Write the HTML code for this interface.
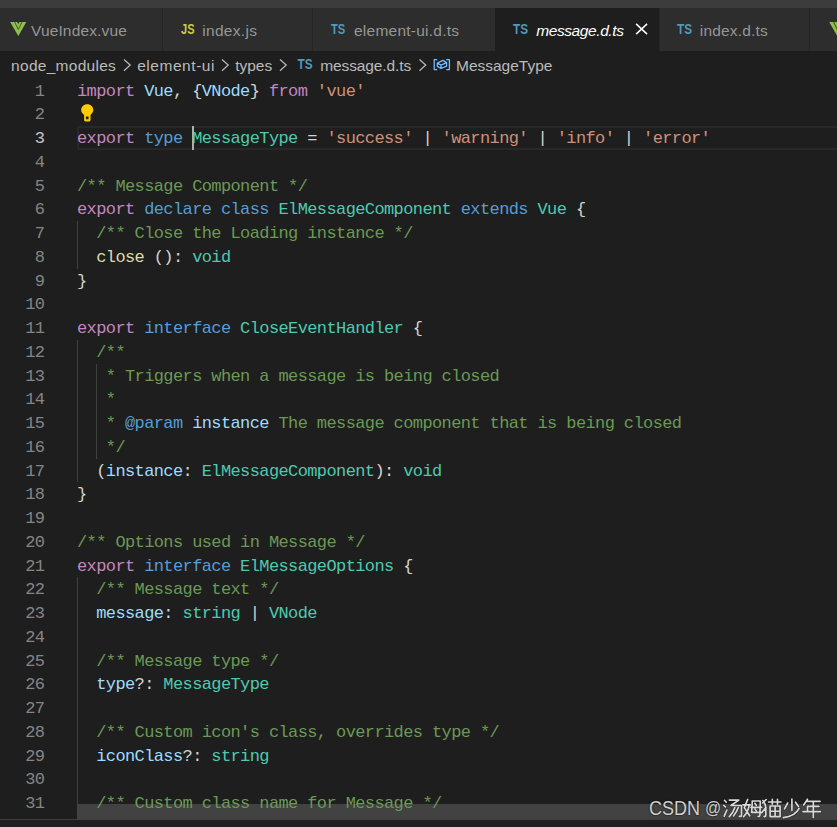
<!DOCTYPE html>
<html><head><meta charset="utf-8">
<style>
*{margin:0;padding:0;box-sizing:border-box}
html,body{width:837px;height:827px;overflow:hidden;background:#1e1e1e}
body{position:relative;font-family:"Liberation Sans",sans-serif}
.abs{position:absolute}
#title{left:0;top:0;width:837px;height:8px;background:#3c3c3c}
#tabs{left:0;top:8px;width:837px;height:43px;background:#252526}
.tab{position:absolute;top:0;height:43px;background:#2d2d2d}
.tab.active{background:#1e1e1e}
.lbl{position:absolute;top:1px;line-height:43px;font-size:15.5px;color:#969696;white-space:nowrap}
.active .lbl{color:#fff;font-style:italic}
.ico{position:absolute}
.lbl i,.cr i{display:inline-block;font-style:inherit}
#crumbs{left:0;top:51px;width:837px;height:27.5px;background:#1e1e1e}
.cr{position:absolute;top:1px;line-height:27.5px;font-size:15.5px;color:#bbbbbb;white-space:nowrap}
.chev{position:absolute}
#editor{left:0;top:78.5px;width:837px;height:748.5px}
.ln{position:absolute;left:0;width:44.4px;text-align:right;font-family:"Liberation Mono",monospace;font-size:17px;letter-spacing:-0.6px;color:#858585;line-height:23.75px;height:23.75px;white-space:pre;padding-top:1px}
.cl{position:absolute;left:77px;font-family:"Liberation Mono",monospace;font-size:17px;color:#d4d4d4;line-height:23.75px;height:23.75px;white-space:pre;padding-top:1px}
.cl i{display:inline-block;width:9.6px;font-style:normal}
.k{color:#c586c0}.b{color:#569cd6}.v{color:#9cdcfe}.t{color:#4ec9b0}.s{color:#ce9178}.c{color:#6a9955}.f{color:#dcdcaa}
.curline{position:absolute;left:77px;top:47.5px;width:760px;height:24px;border:2px solid #282828;border-right:none}
.act{color:#c6c6c6}
.cursor{position:absolute;left:192px;top:47.5px;width:2px;height:24px;background:#aeafad;z-index:2}
.hscroll{position:absolute;left:77px;top:725.5px;width:760px;height:15px;background:#424242}
.wm{font-size:20px;line-height:24px;color:#cfcfcf;white-space:nowrap;text-shadow:0 0 2px #000}
.guide{position:absolute;width:1px;background:#404040}
</style></head><body>
<div id="title" class="abs"></div>
<div id="tabs" class="abs">
  <div class="tab" style="left:0;width:162px">
    <svg class="ico" style="left:0;top:0" width="40" height="43" viewBox="0 8 40 43">
      <polygon points="10.2,21.9 26.3,21.9 18.3,36" fill="#8dc149"/>
      <polyline points="14.4,21.6 18.3,29.4 22.2,21.6" fill="none" stroke="#2d2d2d" stroke-width="0.75"/>
      <polygon points="17,21.6 19.7,21.6 18.35,24.3" fill="#2d2d2d"/>
    </svg>
    <div class="lbl" style="left:31px;"><i style="width:9.906px">V</i><i style="width:8.766px">u</i><i style="width:8.766px">e</i><i style="width:4.438px">I</i><i style="width:8.766px">n</i><i style="width:8.766px">d</i><i style="width:8.766px">e</i><i style="width:7.906px">x</i><i style="width:4.453px">.</i><i style="width:7.891px">v</i><i style="width:8.766px">u</i><i style="width:8.781px">e</i></div>
  </div>
  <div class="tab" style="left:163px;width:149px">
    <svg class="ico" style="left:0;top:0" width="40" height="43"><text x="18" y="25.9" font-family="Liberation Sans" font-weight="bold" font-size="14" fill="#cbcb41" textLength="13.5" lengthAdjust="spacingAndGlyphs">JS</text></svg>
    <div class="lbl" style="left:39.3px;"><i style="width:3.734px">i</i><i style="width:8.922px">n</i><i style="width:8.922px">d</i><i style="width:8.922px">e</i><i style="width:8.047px">x</i><i style="width:4.609px">.</i><i style="width:3.734px">j</i><i style="width:8.078px">s</i></div>
  </div>
  <div class="tab" style="left:313px;width:182px">
    <svg class="ico" style="left:0;top:0" width="40" height="43"><text x="18" y="25.9" font-family="Liberation Sans" font-weight="bold" font-size="14" fill="#519aba" textLength="14.3" lengthAdjust="spacingAndGlyphs">TS</text></svg>
    <div class="lbl" style="left:41px;"><i style="width:8.859px">e</i><i style="width:3.703px">l</i><i style="width:8.859px">e</i><i style="width:13.172px">m</i><i style="width:8.859px">e</i><i style="width:8.875px">n</i><i style="width:4.562px">t</i><i style="width:5.406px">-</i><i style="width:8.875px">u</i><i style="width:3.688px">i</i><i style="width:4.562px">.</i><i style="width:8.859px">d</i><i style="width:4.562px">.</i><i style="width:4.562px">t</i><i style="width:8.016px">s</i></div>
  </div>
  <div class="tab active" style="left:495px;width:164px">
    <svg class="ico" style="left:0;top:0" width="40" height="43"><text x="18" y="25.9" font-family="Liberation Sans" font-weight="bold" font-size="14" fill="#519aba" textLength="15" lengthAdjust="spacingAndGlyphs">TS</text></svg>
    <div class="lbl" style="left:41.2px;"><i style="width:12.500px">m</i><i style="width:8.219px">e</i><i style="width:7.359px">s</i><i style="width:7.344px">s</i><i style="width:8.219px">a</i><i style="width:8.219px">g</i><i style="width:8.219px">e</i><i style="width:3.906px">.</i><i style="width:8.234px">d</i><i style="width:3.906px">.</i><i style="width:3.906px">t</i><i style="width:7.359px">s</i></div>
    <svg class="ico" style="left:135px;top:10px" width="20" height="20" viewBox="0 0 20 20"><path d="M6.1,5.9 L17.1,16.1 M17.1,5.9 L6.1,16.1" stroke="#fff" stroke-width="1.5"/></svg>
  </div>
  <div class="tab" style="left:660px;width:149px">
    <svg class="ico" style="left:0;top:0" width="40" height="43"><text x="17" y="25.9" font-family="Liberation Sans" font-weight="bold" font-size="14" fill="#519aba" textLength="15" lengthAdjust="spacingAndGlyphs">TS</text></svg>
    <div class="lbl" style="left:39.75px;"><i style="width:3.625px">i</i><i style="width:8.797px">n</i><i style="width:8.797px">d</i><i style="width:8.812px">e</i><i style="width:7.938px">x</i><i style="width:4.484px">.</i><i style="width:8.797px">d</i><i style="width:4.500px">.</i><i style="width:4.484px">t</i><i style="width:7.953px">s</i></div>
  </div>
  <div class="tab" style="left:810px;width:27px">
    <svg class="ico" style="left:0;top:0" width="40" height="43" viewBox="0 8 40 43">
      <polygon points="19.2,21.9 35.3,21.9 27.3,36" fill="#8dc149"/>
      <polyline points="23.4,21.6 27.3,29.6 31.2,21.6" fill="none" stroke="#2d2d2d" stroke-width="0.9"/>
    </svg>
  </div>
</div>
<div id="crumbs" class="abs">
  <div class="cr" style="left:11.1px;"><i style="width:8.891px">n</i><i style="width:8.906px">o</i><i style="width:8.891px">d</i><i style="width:8.906px">e</i><i style="width:8.906px">_</i><i style="width:13.188px">m</i><i style="width:8.906px">o</i><i style="width:8.891px">d</i><i style="width:8.906px">u</i><i style="width:3.719px">l</i><i style="width:8.906px">e</i><i style="width:8.047px">s</i></div>
  <svg class="abs" style="left:0;top:0" width="837" height="27.5" viewBox="0 51 837 27.5">
    <g fill="none" stroke="#b4b4b4" stroke-width="1.3">
      <path d="M124,59.5 L130.2,65.1 L124,70.7"/>
      <path d="M222,59.5 L228.2,65.1 L222,70.7"/>
      <path d="M280,59.5 L286.2,65.1 L280,70.7"/>
      <path d="M419.5,59.5 L425.7,65.1 L419.5,70.7"/>
    </g>
    <text x="297.5" y="68.9" font-family="Liberation Sans" font-weight="bold" font-size="14" fill="#519aba" textLength="15" lengthAdjust="spacingAndGlyphs">TS</text>
    <g fill="none" stroke="#75beff" stroke-width="1.25" stroke-linejoin="round">
      <path d="M437.2,59.5 H434.2 V69.5 H437.2 M446.2,59.5 H449.4 V69.5 H446.2"/>
      <path d="M437.3,63.1 L442.9,60.4 L446.6,62.6 L441,65.1 Z M437.3,63.1 V66.4 L441,68.5 L446.6,66.2 V62.6 M441,65.1 V68.5"/>
    </g>
  </svg>
  <div class="cr" style="left:137.2px;"><i style="width:9.156px">e</i><i style="width:4.000px">l</i><i style="width:9.172px">e</i><i style="width:13.453px">m</i><i style="width:9.172px">e</i><i style="width:9.172px">n</i><i style="width:4.859px">t</i><i style="width:5.719px">-</i><i style="width:9.156px">u</i><i style="width:4.016px">i</i></div>
  <div class="cr" style="left:235.2px"><i style="width:4.297px">t</i><i style="width:7.750px">y</i><i style="width:8.625px">p</i><i style="width:8.625px">e</i><i style="width:7.766px">s</i></div>
  <div class="cr" style="left:320.3px;"><i style="width:12.781px">m</i><i style="width:8.500px">e</i><i style="width:7.641px">s</i><i style="width:7.625px">s</i><i style="width:8.500px">a</i><i style="width:8.500px">g</i><i style="width:8.500px">e</i><i style="width:4.188px">.</i><i style="width:8.500px">d</i><i style="width:4.188px">.</i><i style="width:4.188px">t</i><i style="width:7.641px">s</i></div>
  <div class="cr" style="left:456px"><i style="width:12.906px">M</i><i style="width:8.625px">e</i><i style="width:7.750px">s</i><i style="width:7.750px">s</i><i style="width:8.609px">a</i><i style="width:8.625px">g</i><i style="width:8.625px">e</i><i style="width:8.609px">T</i><i style="width:7.750px">y</i><i style="width:8.625px">p</i><i style="width:8.625px">e</i></div>
</div>
<div id="editor" class="abs">
<div class="curline"></div>
<div class="guide" style="left:77px;top:142.5px;height:47.5px"></div>
<div class="guide" style="left:77px;top:261.25px;height:142.5px"></div>
<div class="guide" style="left:96px;top:285px;height:95px"></div>
<div class="guide" style="left:77px;top:498.75px;height:250px"></div>
<svg class="abs" style="left:0;top:0" width="120" height="60" viewBox="0 78.5 120 60">
<path fill="#ffcc00" fill-rule="evenodd" d="M87.25,103.8 C90.8,103.8 93.3,106.3 93.3,109.4 C93.3,111.4 92.2,112.7 90.5,114.4 L90.5,119.6 Q90.5,120.9 89.2,120.9 L85.4,120.9 Q84.1,120.9 84.1,119.6 L84.1,114.4 C82.3,112.7 81.2,111.4 81.2,109.4 C81.2,106.3 83.7,103.8 87.25,103.8 Z M85.9,115.9 H88.6 V118.8 H85.9 Z"/>
</svg>
<div class="cursor"></div>
<div class="hscroll"></div>
<div class="ln" style="top:0.00px">1</div>
<div class="cl" style="top:0.00px"><span class="k"><i>i</i><i>m</i><i>p</i><i>o</i><i>r</i><i>t</i></span><i> </i><span class="v"><i>V</i><i>u</i><i>e</i></span><i>,</i><i> </i><i>{</i><span class="v"><i>V</i><i>N</i><i>o</i><i>d</i><i>e</i></span><i>}</i><i> </i><span class="k"><i>f</i><i>r</i><i>o</i><i>m</i></span><i> </i><span class="s"><i>'</i><i>v</i><i>u</i><i>e</i><i>'</i></span></div>
<div class="ln" style="top:23.75px">2</div>
<div class="ln act" style="top:47.50px">3</div>
<div class="cl" style="top:47.50px"><span class="k"><i>e</i><i>x</i><i>p</i><i>o</i><i>r</i><i>t</i></span><i> </i><span class="b"><i>t</i><i>y</i><i>p</i><i>e</i></span><i> </i><span class="t"><i>M</i><i>e</i><i>s</i><i>s</i><i>a</i><i>g</i><i>e</i><i>T</i><i>y</i><i>p</i><i>e</i></span><i> </i><i>=</i><i> </i><span class="s"><i>'</i><i>s</i><i>u</i><i>c</i><i>c</i><i>e</i><i>s</i><i>s</i><i>'</i></span><i> </i><i>|</i><i> </i><span class="s"><i>'</i><i>w</i><i>a</i><i>r</i><i>n</i><i>i</i><i>n</i><i>g</i><i>'</i></span><i> </i><i>|</i><i> </i><span class="s"><i>'</i><i>i</i><i>n</i><i>f</i><i>o</i><i>'</i></span><i> </i><i>|</i><i> </i><span class="s"><i>'</i><i>e</i><i>r</i><i>r</i><i>o</i><i>r</i><i>'</i></span></div>
<div class="ln" style="top:71.25px">4</div>
<div class="ln" style="top:95.00px">5</div>
<div class="cl" style="top:95.00px"><span class="c"><i>/</i><i>*</i><i>*</i><i> </i><i>M</i><i>e</i><i>s</i><i>s</i><i>a</i><i>g</i><i>e</i><i> </i><i>C</i><i>o</i><i>m</i><i>p</i><i>o</i><i>n</i><i>e</i><i>n</i><i>t</i><i> </i><i>*</i><i>/</i></span></div>
<div class="ln" style="top:118.75px">6</div>
<div class="cl" style="top:118.75px"><span class="k"><i>e</i><i>x</i><i>p</i><i>o</i><i>r</i><i>t</i></span><i> </i><span class="b"><i>d</i><i>e</i><i>c</i><i>l</i><i>a</i><i>r</i><i>e</i></span><i> </i><span class="b"><i>c</i><i>l</i><i>a</i><i>s</i><i>s</i></span><i> </i><span class="t"><i>E</i><i>l</i><i>M</i><i>e</i><i>s</i><i>s</i><i>a</i><i>g</i><i>e</i><i>C</i><i>o</i><i>m</i><i>p</i><i>o</i><i>n</i><i>e</i><i>n</i><i>t</i></span><i> </i><span class="b"><i>e</i><i>x</i><i>t</i><i>e</i><i>n</i><i>d</i><i>s</i></span><i> </i><span class="t"><i>V</i><i>u</i><i>e</i></span><i> </i><i>{</i></div>
<div class="ln" style="top:142.50px">7</div>
<div class="cl" style="top:142.50px"><i> </i><i> </i><span class="c"><i>/</i><i>*</i><i>*</i><i> </i><i>C</i><i>l</i><i>o</i><i>s</i><i>e</i><i> </i><i>t</i><i>h</i><i>e</i><i> </i><i>L</i><i>o</i><i>a</i><i>d</i><i>i</i><i>n</i><i>g</i><i> </i><i>i</i><i>n</i><i>s</i><i>t</i><i>a</i><i>n</i><i>c</i><i>e</i><i> </i><i>*</i><i>/</i></span></div>
<div class="ln" style="top:166.25px">8</div>
<div class="cl" style="top:166.25px"><i> </i><i> </i><span class="f"><i>c</i><i>l</i><i>o</i><i>s</i><i>e</i></span><i> </i><i>(</i><i>)</i><i>:</i><i> </i><span class="t"><i>v</i><i>o</i><i>i</i><i>d</i></span></div>
<div class="ln" style="top:190.00px">9</div>
<div class="cl" style="top:190.00px"><i>}</i></div>
<div class="ln" style="top:213.75px">10</div>
<div class="ln" style="top:237.50px">11</div>
<div class="cl" style="top:237.50px"><span class="k"><i>e</i><i>x</i><i>p</i><i>o</i><i>r</i><i>t</i></span><i> </i><span class="b"><i>i</i><i>n</i><i>t</i><i>e</i><i>r</i><i>f</i><i>a</i><i>c</i><i>e</i></span><i> </i><span class="t"><i>C</i><i>l</i><i>o</i><i>s</i><i>e</i><i>E</i><i>v</i><i>e</i><i>n</i><i>t</i><i>H</i><i>a</i><i>n</i><i>d</i><i>l</i><i>e</i><i>r</i></span><i> </i><i>{</i></div>
<div class="ln" style="top:261.25px">12</div>
<div class="cl" style="top:261.25px"><i> </i><i> </i><span class="c"><i>/</i><i>*</i><i>*</i></span></div>
<div class="ln" style="top:285.00px">13</div>
<div class="cl" style="top:285.00px"><i> </i><i> </i><i> </i><span class="c"><i>*</i><i> </i><i>T</i><i>r</i><i>i</i><i>g</i><i>g</i><i>e</i><i>r</i><i>s</i><i> </i><i>w</i><i>h</i><i>e</i><i>n</i><i> </i><i>a</i><i> </i><i>m</i><i>e</i><i>s</i><i>s</i><i>a</i><i>g</i><i>e</i><i> </i><i>i</i><i>s</i><i> </i><i>b</i><i>e</i><i>i</i><i>n</i><i>g</i><i> </i><i>c</i><i>l</i><i>o</i><i>s</i><i>e</i><i>d</i></span></div>
<div class="ln" style="top:308.75px">14</div>
<div class="cl" style="top:308.75px"><i> </i><i> </i><i> </i><span class="c"><i>*</i></span></div>
<div class="ln" style="top:332.50px">15</div>
<div class="cl" style="top:332.50px"><i> </i><i> </i><i> </i><span class="c"><i>*</i><i> </i></span><span class="b"><i>@</i><i>p</i><i>a</i><i>r</i><i>a</i><i>m</i></span><i> </i><span class="v"><i>i</i><i>n</i><i>s</i><i>t</i><i>a</i><i>n</i><i>c</i><i>e</i></span><span class="c"><i> </i><i>T</i><i>h</i><i>e</i><i> </i><i>m</i><i>e</i><i>s</i><i>s</i><i>a</i><i>g</i><i>e</i><i> </i><i>c</i><i>o</i><i>m</i><i>p</i><i>o</i><i>n</i><i>e</i><i>n</i><i>t</i><i> </i><i>t</i><i>h</i><i>a</i><i>t</i><i> </i><i>i</i><i>s</i><i> </i><i>b</i><i>e</i><i>i</i><i>n</i><i>g</i><i> </i><i>c</i><i>l</i><i>o</i><i>s</i><i>e</i><i>d</i></span></div>
<div class="ln" style="top:356.25px">16</div>
<div class="cl" style="top:356.25px"><i> </i><i> </i><i> </i><span class="c"><i>*</i><i>/</i></span></div>
<div class="ln" style="top:380.00px">17</div>
<div class="cl" style="top:380.00px"><i> </i><i> </i><i>(</i><span class="v"><i>i</i><i>n</i><i>s</i><i>t</i><i>a</i><i>n</i><i>c</i><i>e</i></span><i>:</i><i> </i><span class="t"><i>E</i><i>l</i><i>M</i><i>e</i><i>s</i><i>s</i><i>a</i><i>g</i><i>e</i><i>C</i><i>o</i><i>m</i><i>p</i><i>o</i><i>n</i><i>e</i><i>n</i><i>t</i></span><i>)</i><i>:</i><i> </i><span class="t"><i>v</i><i>o</i><i>i</i><i>d</i></span></div>
<div class="ln" style="top:403.75px">18</div>
<div class="cl" style="top:403.75px"><i>}</i></div>
<div class="ln" style="top:427.50px">19</div>
<div class="ln" style="top:451.25px">20</div>
<div class="cl" style="top:451.25px"><span class="c"><i>/</i><i>*</i><i>*</i><i> </i><i>O</i><i>p</i><i>t</i><i>i</i><i>o</i><i>n</i><i>s</i><i> </i><i>u</i><i>s</i><i>e</i><i>d</i><i> </i><i>i</i><i>n</i><i> </i><i>M</i><i>e</i><i>s</i><i>s</i><i>a</i><i>g</i><i>e</i><i> </i><i>*</i><i>/</i></span></div>
<div class="ln" style="top:475.00px">21</div>
<div class="cl" style="top:475.00px"><span class="k"><i>e</i><i>x</i><i>p</i><i>o</i><i>r</i><i>t</i></span><i> </i><span class="b"><i>i</i><i>n</i><i>t</i><i>e</i><i>r</i><i>f</i><i>a</i><i>c</i><i>e</i></span><i> </i><span class="t"><i>E</i><i>l</i><i>M</i><i>e</i><i>s</i><i>s</i><i>a</i><i>g</i><i>e</i><i>O</i><i>p</i><i>t</i><i>i</i><i>o</i><i>n</i><i>s</i></span><i> </i><i>{</i></div>
<div class="ln" style="top:498.75px">22</div>
<div class="cl" style="top:498.75px"><i> </i><i> </i><span class="c"><i>/</i><i>*</i><i>*</i><i> </i><i>M</i><i>e</i><i>s</i><i>s</i><i>a</i><i>g</i><i>e</i><i> </i><i>t</i><i>e</i><i>x</i><i>t</i><i> </i><i>*</i><i>/</i></span></div>
<div class="ln" style="top:522.50px">23</div>
<div class="cl" style="top:522.50px"><i> </i><i> </i><span class="v"><i>m</i><i>e</i><i>s</i><i>s</i><i>a</i><i>g</i><i>e</i></span><i>:</i><i> </i><span class="t"><i>s</i><i>t</i><i>r</i><i>i</i><i>n</i><i>g</i></span><i> </i><i>|</i><i> </i><span class="t"><i>V</i><i>N</i><i>o</i><i>d</i><i>e</i></span></div>
<div class="ln" style="top:546.25px">24</div>
<div class="ln" style="top:570.00px">25</div>
<div class="cl" style="top:570.00px"><i> </i><i> </i><span class="c"><i>/</i><i>*</i><i>*</i><i> </i><i>M</i><i>e</i><i>s</i><i>s</i><i>a</i><i>g</i><i>e</i><i> </i><i>t</i><i>y</i><i>p</i><i>e</i><i> </i><i>*</i><i>/</i></span></div>
<div class="ln" style="top:593.75px">26</div>
<div class="cl" style="top:593.75px"><i> </i><i> </i><span class="v"><i>t</i><i>y</i><i>p</i><i>e</i></span><i>?</i><i>:</i><i> </i><span class="t"><i>M</i><i>e</i><i>s</i><i>s</i><i>a</i><i>g</i><i>e</i><i>T</i><i>y</i><i>p</i><i>e</i></span></div>
<div class="ln" style="top:617.50px">27</div>
<div class="ln" style="top:641.25px">28</div>
<div class="cl" style="top:641.25px"><i> </i><i> </i><span class="c"><i>/</i><i>*</i><i>*</i><i> </i><i>C</i><i>u</i><i>s</i><i>t</i><i>o</i><i>m</i><i> </i><i>i</i><i>c</i><i>o</i><i>n</i><i>'</i><i>s</i><i> </i><i>c</i><i>l</i><i>a</i><i>s</i><i>s</i><i>,</i><i> </i><i>o</i><i>v</i><i>e</i><i>r</i><i>r</i><i>i</i><i>d</i><i>e</i><i>s</i><i> </i><i>t</i><i>y</i><i>p</i><i>e</i><i> </i><i>*</i><i>/</i></span></div>
<div class="ln" style="top:665.00px">29</div>
<div class="cl" style="top:665.00px"><i> </i><i> </i><span class="v"><i>i</i><i>c</i><i>o</i><i>n</i><i>C</i><i>l</i><i>a</i><i>s</i><i>s</i></span><i>?</i><i>:</i><i> </i><span class="t"><i>s</i><i>t</i><i>r</i><i>i</i><i>n</i><i>g</i></span></div>
<div class="ln" style="top:688.75px">30</div>
<div class="ln" style="top:712.50px">31</div>
<div class="cl" style="top:712.50px"><i> </i><i> </i><span class="c"><i>/</i><i>*</i><i>*</i><i> </i><i>C</i><i>u</i><i>s</i><i>t</i><i>o</i><i>m</i><i> </i><i>c</i><i>l</i><i>a</i><i>s</i><i>s</i><i> </i><i>n</i><i>a</i><i>m</i><i>e</i><i> </i><i>f</i><i>o</i><i>r</i><i> </i><i>M</i><i>e</i><i>s</i><i>s</i><i>a</i><i>g</i><i>e</i><i> </i><i>*</i><i>/</i></span></div>
</div>
<div class="abs" style="left:0;top:819px;width:837px;height:1px;background:#404040"></div>
<div class="abs" style="left:0;top:820px;width:837px;height:7px;background:#1e1e1e"></div>
<div class="abs wm" style="left:648.5px;top:795.8px;transform:scaleX(0.9);transform-origin:0 0">CSDN</div>
<div class="abs wm" style="left:705px;top:795.5px;font-size:19px;transform:scaleX(0.84);transform-origin:0 0">@</div>
<svg class="abs" style="left:720px;top:795px" width="110" height="27" viewBox="720 795 110 27">
<g fill="none" stroke-linecap="round" stroke-linejoin="round">
<g stroke="#000" stroke-opacity="0.35" stroke-width="2.6">
<g transform="translate(723.3,799)">
<path d="M1.2,1.3 L3,3.2 M0.5,6.3 L2.3,8 M0.9,17.2 L3.6,11"/>
<path d="M6,1.1 H15.5 L8,6.3 M7.6,6.5 H18.2 V16 Q18.2,17.8 16,17.2 M11.6,8.6 Q10,13.5 6,17.6 M15,8.6 Q13.5,13 10.2,17"/>
</g>
<g transform="translate(742.7,799)">
<path d="M5,0.4 L1.6,8.6 L7,16.8 M6.6,5.6 Q5.6,12.8 0.8,17.6 M0.2,5.9 H7.6"/>
<path d="M9.4,2 H17.6 L17.2,16.3 Q17.1,18 15.4,17.3 M9.6,2 L9,13.2 M8.2,8.4 H19 M8.8,13.3 H18.4 M12.2,4.2 L13.6,6.2 M12.2,9.9 L13.6,11.9"/>
</g>
<g transform="translate(761.3,799)">
<path d="M5,0.5 L1.2,4 M1.6,1.5 Q4.5,5 4.5,9 V16.2 Q4.5,18 2.8,17.4 M4.6,8.5 L0.5,13.8"/>
<path d="M7.2,3 H19.8 M11,0.4 V5.2 M16.2,0.4 V5.2 M8.8,7 H18.8 V17.6 H8.8 Z M8.8,12.2 H18.8 M13.8,7 V17.6"/>
</g>
<g transform="translate(782.3,799)">
<path d="M9.6,0 V11.6 M5.4,4 L2.2,9.8 M13.2,3.2 L16.2,7.4 M16.8,9.4 Q13,17.2 1,18.6"/>
</g>
<g transform="translate(802.5,799)">
<path d="M5,0.2 L1.2,6 M3.6,2.4 H17.6 M5,7.4 H16.4 M5,7.4 V12.6 M0.4,12.6 H18 M10.8,2.6 V18.6"/>
</g>
</g><g stroke="#dadada" stroke-width="1.65">
<g transform="translate(723.3,799)">
<path d="M1.2,1.3 L3,3.2 M0.5,6.3 L2.3,8 M0.9,17.2 L3.6,11"/>
<path d="M6,1.1 H15.5 L8,6.3 M7.6,6.5 H18.2 V16 Q18.2,17.8 16,17.2 M11.6,8.6 Q10,13.5 6,17.6 M15,8.6 Q13.5,13 10.2,17"/>
</g>
<g transform="translate(742.7,799)">
<path d="M5,0.4 L1.6,8.6 L7,16.8 M6.6,5.6 Q5.6,12.8 0.8,17.6 M0.2,5.9 H7.6"/>
<path d="M9.4,2 H17.6 L17.2,16.3 Q17.1,18 15.4,17.3 M9.6,2 L9,13.2 M8.2,8.4 H19 M8.8,13.3 H18.4 M12.2,4.2 L13.6,6.2 M12.2,9.9 L13.6,11.9"/>
</g>
<g transform="translate(761.3,799)">
<path d="M5,0.5 L1.2,4 M1.6,1.5 Q4.5,5 4.5,9 V16.2 Q4.5,18 2.8,17.4 M4.6,8.5 L0.5,13.8"/>
<path d="M7.2,3 H19.8 M11,0.4 V5.2 M16.2,0.4 V5.2 M8.8,7 H18.8 V17.6 H8.8 Z M8.8,12.2 H18.8 M13.8,7 V17.6"/>
</g>
<g transform="translate(782.3,799)">
<path d="M9.6,0 V11.6 M5.4,4 L2.2,9.8 M13.2,3.2 L16.2,7.4 M16.8,9.4 Q13,17.2 1,18.6"/>
</g>
<g transform="translate(802.5,799)">
<path d="M5,0.2 L1.2,6 M3.6,2.4 H17.6 M5,7.4 H16.4 M5,7.4 V12.6 M0.4,12.6 H18 M10.8,2.6 V18.6"/>
</g>
</g>
</g>
</svg>
</body></html>
